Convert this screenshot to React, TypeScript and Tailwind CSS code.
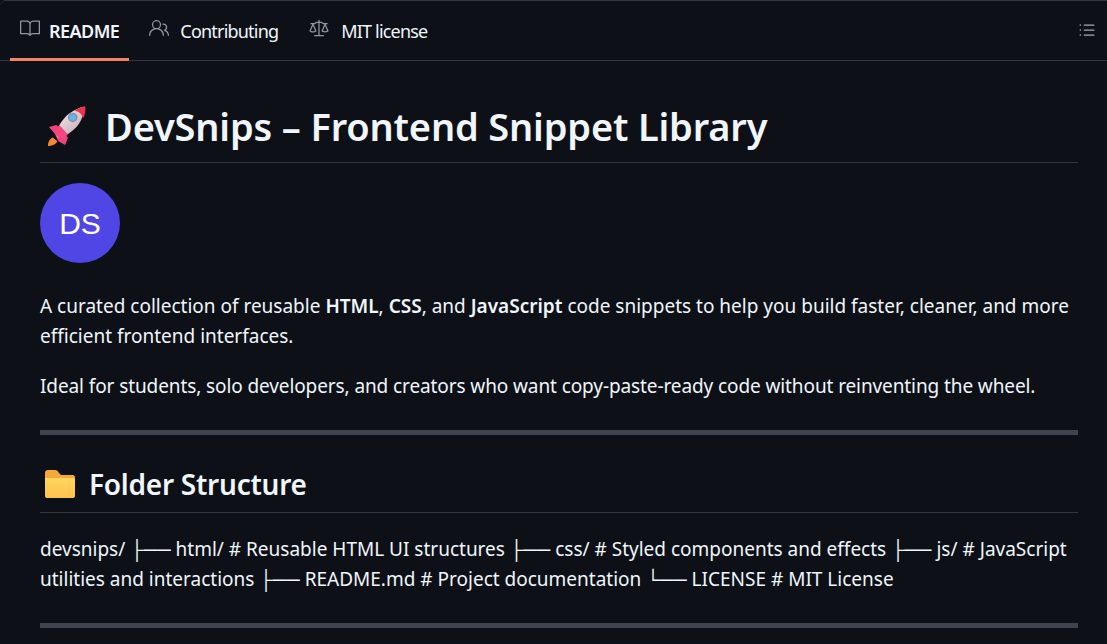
import { GoBook, GoPeople, GoLaw, GoListUnordered } from "react-icons/go";

const sans = "font-['Noto_Sans','Open_Sans',sans-serif]";

function Rocket() {
  return (
    <svg width="40" height="40" viewBox="0 0 42 42" className="shrink-0">
      <defs>
        <linearGradient id="rb" x1="0.2" y1="0" x2="0.9" y2="0.9">
          <stop offset="0" stopColor="#f4eaec" />
          <stop offset="1" stopColor="#c9a9b6" />
        </linearGradient>
      </defs>
      <path d="M6 33 C2 35 1 39 1 42 C4 42 9 41 11 37 Z" fill="#f58a2c" />
      <path d="M10 20 L2 22 L8 29 L12 37 L19 41 L22 33 Z" fill="#f2447c" />
      <path d="M11 33 C9 28 11 21 18 13 C24 6 31 3 37 1 C39 8 37 15 31 22 C25 28 18 33 11 33 Z" fill="url(#rb)" />
      <path d="M29 5 C32 3 36 1 40 0 C41 4 40 9 38 13 C37 9 34 6 29 5 Z" fill="#ee3350" />
      <path d="M9 28 C10 24 11 22 13 20 L22 30 C19 33 16 35 13 35 Z" fill="#f4457f" />
      <circle cx="27" cy="12" r="5" fill="#8c8f9c" />
      <circle cx="27" cy="12" r="3.4" fill="#62b4f2" />
    </svg>
  );
}

function Folder() {
  return (
    <svg width="30" height="28" viewBox="0 0 30 28" className="shrink-0">
      <defs>
        <linearGradient id="fb" x1="0" y1="0" x2="0" y2="1">
          <stop offset="0" stopColor="#ffd65c" />
          <stop offset="1" stopColor="#ffc14f" />
        </linearGradient>
      </defs>
      <path d="M0 3 C0 1 1 0 3 0 H10 C12 0 13 1 14 3 L16 5 H28 C29 5 30 6 30 7 V12 H0 Z" fill="#f5a93b" />
      <path d="M0 8 H28 C29 8 30 9 30 10 V26 C30 27 29 28 28 28 H2 C1 28 0 27 0 26 Z" fill="url(#fb)" />
    </svg>
  );
}

function Tab({ icon, label, active, gap, track }: { icon: React.ReactNode; label: string; active?: boolean; gap: string; track: string }) {
  return (
    <div className={`flex items-center h-[60px] px-[10px] pt-[4px] border-b-[3px] ${active ? "border-[#f78166] font-semibold" : "border-transparent"} text-[#f0f6fc]`}>
      <span className={`text-[#9198a1] flex -mt-[7px] ${gap}`}>{icon}</span>
      <span className={`text-[18px] ${track}`}>{label}</span>
    </div>
  );
}

export default function App() {
  return (
    <div className={`${sans} w-[1107px] h-[644px] overflow-hidden bg-[#0d1117] text-[#f0f6fc]`}>
      <div className="flex items-center justify-between h-[61px] border-t border-b border-[#30363d] rounded-tl-md">
        <div className="flex items-center gap-[10px] pl-[10px] h-[60px]">
          <Tab icon={<GoBook size={20} />} label="README" active gap="mr-[9px]" track="tracking-[-0.55px]" />
          <div className="flex items-center gap-[11px]">
            <Tab icon={<GoPeople size={20} />} label="Contributing" gap="mr-[11px]" track="tracking-[-0.8px]" />
            <Tab icon={<GoLaw size={20} />} label="MIT license" gap="mr-[12px]" track="tracking-[-0.82px]" />
          </div>
        </div>
        <GoListUnordered size={20} className="text-[#a4abb4] mr-[10px] -mt-[2px]" />
      </div>
      <div className="pl-[40px] pr-[29px]">
        <h1 className="flex items-center h-[102px] pt-[32px] pb-[3px] gap-[18px] border-b border-[#30363d] text-[38px] font-semibold tracking-[-0.17px] pl-[7px]">
          <Rocket />
          <span>DevSnips – Frontend Snippet Library</span>
        </h1>
        <div className="mt-[20px] w-[80px] h-[80px] rounded-full bg-[#4f46e5] flex items-center justify-center text-[30px] font-['Liberation_Sans',sans-serif] text-white">DS</div>
        <p className="mt-[28px] text-[19px] leading-[30px]">
          A curated collection of reusable <b className="font-semibold">HTML</b>, <b className="font-semibold">CSS</b>, and <b className="font-semibold">JavaScript</b> code snippets to help you build faster, cleaner, and more efficient frontend interfaces.
        </p>
        <p className="mt-[20px] text-[19px] leading-[30px] tracking-[-0.1px]">
          Ideal for students, solo developers, and creators who want copy-paste-ready code without reinventing the wheel.
        </p>
        <div className="mt-[29px] h-[5px] bg-[#3d444d]" />
        <h2 className="flex items-center h-[78px] pt-[21px] gap-[14px] pl-[5px] border-b border-[#30363d] text-[28px] font-semibold tracking-[-0.25px]">
          <Folder />
          <span>Folder Structure</span>
        </h2>
        <p className="mt-[21px] text-[19px] leading-[30px]">
          devsnips/ ├── html/ # Reusable HTML UI structures ├── css/ # Styled components and effects ├── js/ # JavaScript utilities and interactions ├── README.md # Project documentation └── LICENSE # MIT License
        </p>
        <div className="mt-[29px] h-[5px] bg-[#3d444d]" />
      </div>
    </div>
  );
}
